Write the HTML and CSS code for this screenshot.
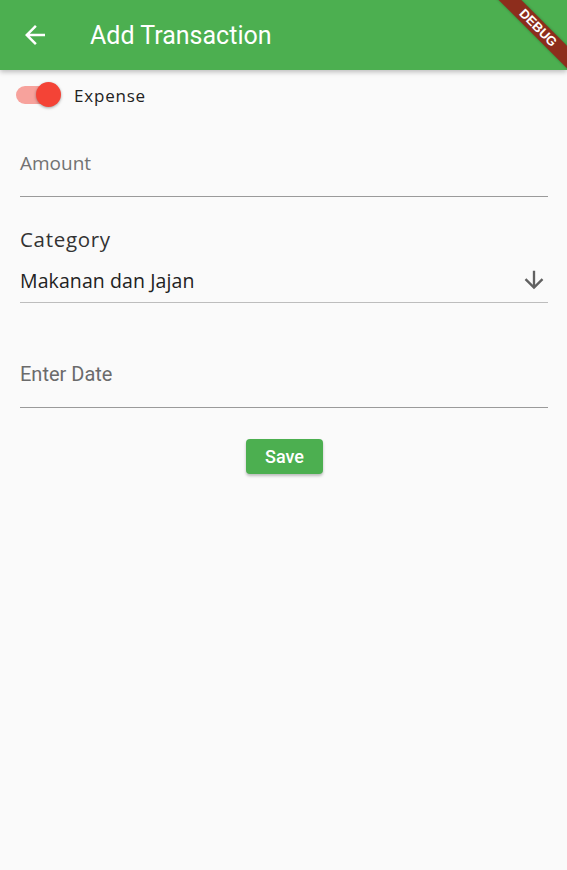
FILE: index.html
```html
<!DOCTYPE html>
<html>
<head>
<meta charset="utf-8">
<link rel="stylesheet" href="styles.css">
</head>
<body>
<header class="appbar">
  <svg class="back" viewBox="0 0 24 24" width="30" height="30"><path d="M20 11H7.83l5.59-5.59L12 4l-8 8 8 8 1.41-1.41L7.83 13H20v-2z" fill="#fff"/></svg>
  <h1 class="title">Add Transaction</h1>
  <div class="debug"><span>DEBUG</span></div>
</header>
<main class="form">
  <div class="switch-row">
    <div class="switch"><div class="track"></div><div class="thumb"></div></div>
    <span class="switch-label">Expense</span>
  </div>
  <div class="field amount"><span class="placeholder mont">Amount</span></div>
  <div class="category-label">Category</div>
  <div class="field dropdown">
    <span class="value">Makanan dan Jajan</span>
    <svg class="arrow" viewBox="0 0 24 24" width="28" height="28"><path d="M20 12l-1.41-1.41L13 16.17V4h-2v12.17l-5.58-5.59L4 12l8 8 8-8z" fill="#616161"/></svg>
  </div>
  <div class="field date"><span class="placeholder">Enter Date</span></div>
  <div class="actions"><button class="save">Save</button></div>
</main>
</body>
</html>
```
FILE: styles.css
```css
html, body { margin: 0; padding: 0; }
body {
  background: #fafafa;
  width: 567px;
  height: 870px;
  overflow: hidden;
  font-family: Roboto, "Liberation Sans", sans-serif;
}
.appbar {
  position: relative;
  height: 70px;
  background: #4caf50;
  display: flex;
  align-items: center;
  box-shadow: 0 2px 5px rgba(0,0,0,0.25);
  overflow: hidden;
  z-index: 1;
}
.back { margin-left: 20px; display: block; }
.title {
  margin: 0 0 0 40px;
  color: #fff;
  font-size: 25px;
  font-weight: 400;
  letter-spacing: 0;
}
.debug {
  position: absolute;
  top: 0; right: 0;
  width: 100px; height: 100px;
  overflow: hidden;
}
.debug span {
  position: absolute;
  top: 20px; right: -36px;
  width: 130px;
  transform: rotate(45deg);
  background: #8d2d1c;
  color: #fff;
  font-family: "Liberation Sans", sans-serif;
  font-weight: bold;
  font-size: 13px;
  text-align: center;
  line-height: 16px;
  box-shadow: 0 0 3px rgba(0,0,0,0.3);
}
.form { padding: 0 19px 0 20px; }
.switch-row {
  display: flex;
  align-items: center;
  height: 52px;
  margin-left: -4px;
  margin-top: -1px;
}
.switch { position: relative; width: 46px; height: 26px; }
.track {
  position: absolute; left: 0; top: 4px;
  width: 42px; height: 18px; border-radius: 9px;
  background: #f7a29c;
}
.thumb {
  position: absolute; left: 20px; top: 0;
  width: 25px; height: 25px; border-radius: 50%;
  background: #f44336;
  box-shadow: 0 1px 3px rgba(0,0,0,0.35);
}
.switch-label {
  margin-left: 12px;
  font-family: "Open Sans", sans-serif;
  font-size: 17px;
  letter-spacing: 0.8px;
  color: #222;
}
.field {
  border-bottom: 1.3px solid #9a9a9a;
  display: flex;
  align-items: center;
}
.amount { height: 75px; margin-top: 0; align-items: flex-end; }
.amount .placeholder { margin-bottom: 20px; }
.placeholder { font-size: 20px; color: #6b6b6b; }
.mont { font-family: "Open Sans", sans-serif; font-size: 19px; color: #727272; }
.category-label {
  margin-top: 28px;
  font-family: "Open Sans", sans-serif;
  font-size: 20.5px;
  letter-spacing: 0.7px;
  color: #333;
  line-height: 28px;
}
.dropdown {
  height: 44px;
  margin-top: 5px;
  justify-content: space-between;
  border-bottom-color: #bdbdbd;
}
.value { font-family: "Open Sans", sans-serif; font-size: 19.5px; color: #222; letter-spacing: 0.1px; }
.arrow { margin-right: 0; }
.date { height: 77px; margin-top: 27px; align-items: flex-end; padding-bottom: 0; }
.date .placeholder { margin-bottom: 21px; }
.actions { display: flex; justify-content: center; padding-top: 31px; }
.save {
  background: #4caf50;
  color: #fff;
  border: none;
  border-radius: 4px;
  width: 77px; height: 35px;
  font-family: Roboto, sans-serif;
  font-weight: 500;
  font-size: 18px;
  box-shadow: 0 2px 3px rgba(0,0,0,0.25);
  margin-left: 1px;
}
```
